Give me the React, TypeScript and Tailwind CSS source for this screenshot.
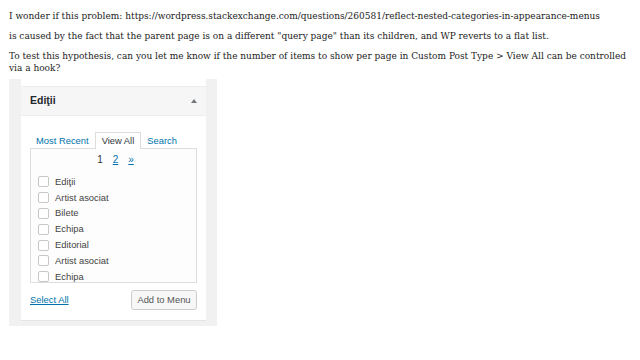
const items = ["Ediţii", "Artist asociat", "Bilete", "Echipa", "Editorial", "Artist asociat", "Echipa"];

export default function App() {
  return (
    <div className="min-h-[360px] w-[640px] bg-white pl-[9px] pt-[10px]">
      <div className="font-['DejaVu_Serif',serif] font-stretch-condensed text-[10px] leading-[12px] text-[#222]">
        <p className="mb-[8px]">
          I wonder if this problem: https://wordpress.stackexchange.com/questions/260581/reflect-nested-categories-in-appearance-menus
        </p>
        <p className="mb-[8px]">
          is caused by the fact that the parent page is on a different "query page" than its children, and WP reverts to a flat list.
        </p>
        <p className="w-[625px]">
          To test this hypothesis, can you let me know if the number of items to show per page in Custom Post Type &gt; View All can be controlled via a hook?
        </p>
      </div>

      <div className="mt-[5px] w-[208px] bg-[#f1f1f1] pl-[12px] pr-[11px] pb-[5px] font-['Liberation_Sans',Arial,sans-serif] text-[#32373c]">
        <div className="bg-white pt-[7px] border-b border-[#e5e5e5]">
          <div className="flex h-[30px] items-center justify-between border-y border-[#eeeeee] bg-[#f6f6f6] pl-[9px] pr-[9px]">
            <span className="text-[10.5px] font-bold text-[#23282d]">Ediţii</span>
            <span className="h-0 w-0 border-x-[3px] border-b-[4px] border-x-transparent border-b-[#72777c]" />
          </div>

          <div className="px-[9px] pt-[15px] pb-[10px]">
            <div className="flex items-end text-[9.4px] leading-[12px]">
              <span className="px-[6px] pb-[1px] text-[#0073aa]">Most Recent</span>
              <span className="relative top-[1px] border border-b-0 border-[#dddddd] bg-white px-[6px] pt-[2px] pb-[2px] text-[#32373c]">View All</span>
              <span className="px-[6px] pb-[1px] text-[#0073aa]">Search</span>
            </div>
            <div className="h-[135px] overflow-hidden border border-[#dddddd] bg-[#fdfdfd]">
              <div className="flex justify-center gap-[10px] pt-[4px] pl-[4px] text-[10px] leading-[14px]">
                <span>1</span>
                <span className="text-[#0073aa] underline">2</span>
                <span className="text-[#0073aa] underline">»</span>
              </div>
              <ul className="pt-[7px] pl-[7px]">
                {items.map((label, i) => (
                  <li key={i} className="flex h-[15.8px] items-center gap-[6px] text-[9.4px] text-[#444]">
                    <span className="h-[11px] w-[11px] rounded-[2px] border border-[#c8c8c8] bg-white" />
                    <span>{label}</span>
                  </li>
                ))}
              </ul>
            </div>
            <div className="mt-[7px] flex items-center justify-between">
              <a className="text-[9.4px] text-[#0073aa] underline">Select All</a>
              <button className="h-[20px] w-[66px] rounded-[3px] border border-[#cccccc] bg-[#f7f7f7] text-[9.4px] text-[#555555]">
                Add to Menu
              </button>
            </div>
          </div>
        </div>
      </div>
    </div>
  );
}
